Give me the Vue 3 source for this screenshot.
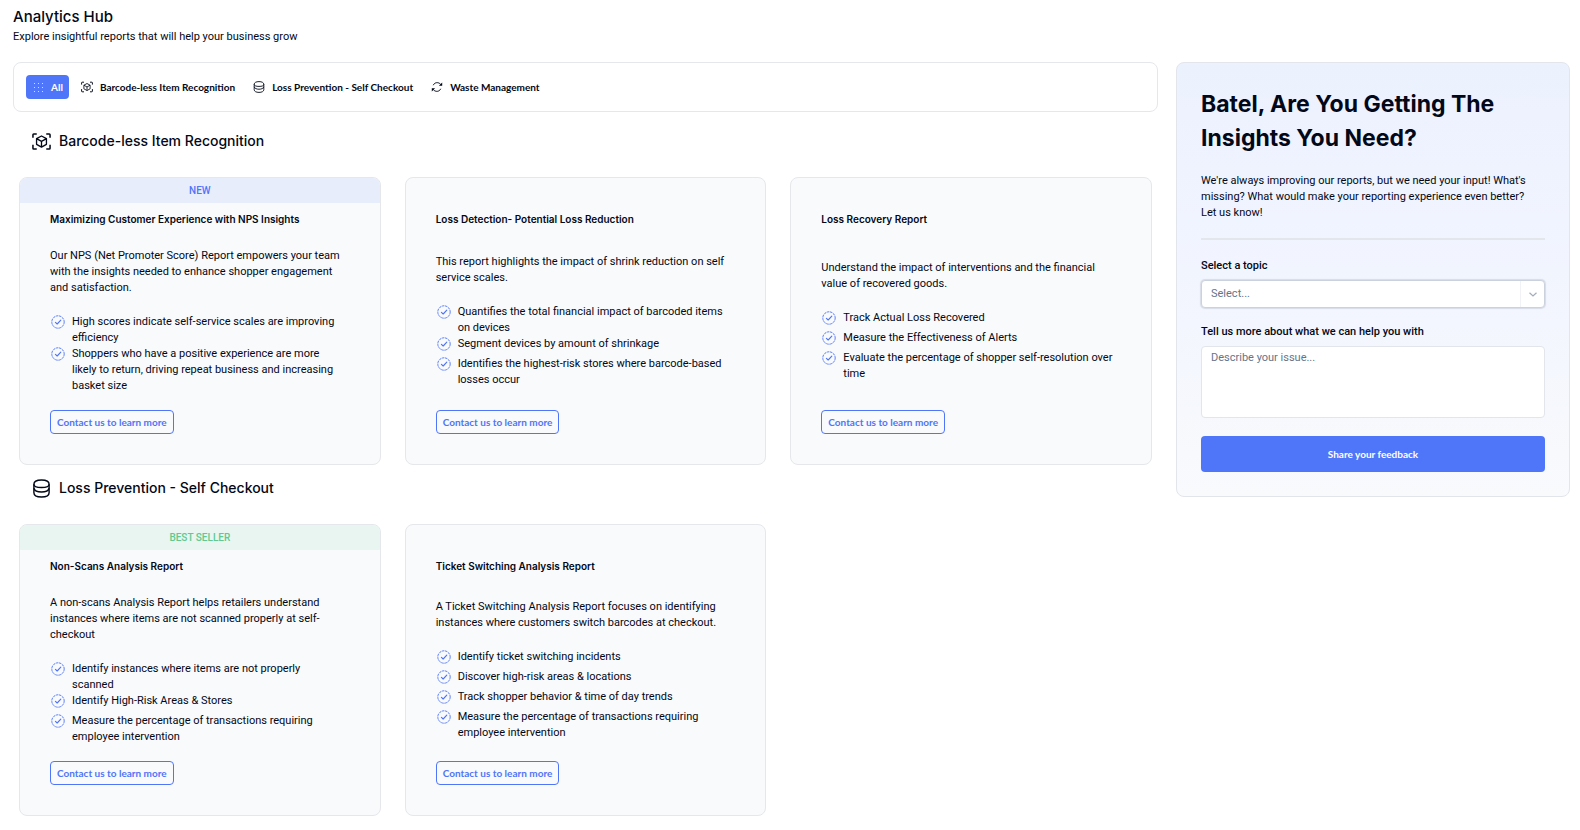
<script setup>
import { ref, computed } from 'vue'

const tabs = [
  { id: 'all', label: 'All', icon: 'grid' },
  { id: 'barcode', label: 'Barcode-less Item Recognition', icon: 'scan' },
  { id: 'loss', label: 'Loss Prevention - Self Checkout', icon: 'stack' },
  { id: 'waste', label: 'Waste Management', icon: 'cycle' }
]

const sections = [
  {
    id: 'barcode',
    title: 'Barcode-less Item Recognition',
    icon: 'scan',
    reports: [
      {
        badge: 'NEW',
        tone: 'new',
        title: 'Maximizing Customer Experience with NPS Insights',
        text: 'Our NPS (Net Promoter Score) Report empowers your team with the insights needed to enhance shopper engagement and satisfaction.',
        points: [
          'High scores indicate self-service scales are improving efficiency',
          'Shoppers who have a positive experience are more likely to return, driving repeat business and increasing basket size'
        ]
      },
      {
        title: 'Loss Detection- Potential Loss Reduction',
        text: 'This report highlights the impact of shrink reduction on self service scales.',
        points: [
          'Quantifies the total financial impact of barcoded items on devices',
          'Segment devices by amount of shrinkage',
          'Identifies the highest-risk stores where barcode-based losses occur'
        ]
      },
      {
        title: 'Loss Recovery Report',
        text: 'Understand the impact of interventions and the financial value of recovered goods.',
        points: [
          'Track Actual Loss Recovered',
          'Measure the Effectiveness of Alerts',
          'Evaluate the percentage of shopper self-resolution over time'
        ]
      }
    ]
  },
  {
    id: 'loss',
    title: 'Loss Prevention - Self Checkout',
    icon: 'stack',
    reports: [
      {
        badge: 'BEST SELLER',
        tone: 'best',
        title: 'Non-Scans Analysis Report',
        text: 'A non-scans Analysis Report helps retailers understand instances where items are not scanned properly at self-checkout',
        points: [
          'Identify instances where items are not properly scanned',
          'Identify High-Risk Areas & Stores',
          'Measure the percentage of transactions requiring employee intervention'
        ]
      },
      {
        title: 'Ticket Switching Analysis Report',
        text: 'A Ticket Switching Analysis Report focuses on identifying instances where customers switch barcodes at checkout.',
        points: [
          'Identify ticket switching incidents',
          'Discover high-risk areas & locations',
          'Track shopper behavior & time of day trends',
          'Measure the percentage of transactions requiring employee intervention'
        ]
      }
    ]
  }
]

const activeTab = ref('all')
const topic = ref('')
const message = ref('')

const visibleSections = computed(() =>
  activeTab.value === 'all' ? sections : sections.filter((s) => s.id === activeTab.value)
)
</script>

<template>
  <!-- shared icon shapes -->
  <svg class="sprite" aria-hidden="true">
    <symbol id="i-grid" viewBox="0 0 12 12">
      <g fill="currentColor" opacity=".75">
        <template v-for="y in 3" :key="y">
          <rect v-for="x in 3" :key="x" :x="x * 4 - 2" :y="y * 4 - 2" width="1" height="1" />
        </template>
      </g>
    </symbol>
    <symbol id="i-scan" viewBox="0 0 20 18">
      <g fill="none" stroke="currentColor" stroke-linejoin="round">
        <path stroke-width="1.6" d="M1 5V1.8a.8.8 0 0 1 .8-.8H5M15 1h3.2a.8.8 0 0 1 .8.8V5M19 12.500v3.700a.8.8 0 0 1-.8.8H15M5 17H1.800a.8.8 0 0 1-.8-.8V12.500" />
        <path stroke-width="1.4" d="M10 3.200l5.200 2.800v6L10 14.900 4.800 12V6zM4.800 6L10 8.900 15.200 6M10 8.900v6" />
      </g>
    </symbol>
    <symbol id="i-stack" viewBox="0 0 18 20">
      <g fill="none" stroke="currentColor" stroke-width="1.5">
        <path d="M1 5.500C1 2.800 4.200 1 9 1s8 1.800 8 4.500S13.800 9 9 9 1 8 1 5.500z" />
        <path d="M1 5.500v9C1 17.300 4.200 19 9 19s8-1.700 8-4.500v-9" />
        <path d="M1 9.700c.7 2.600 3.800 4 8 4s7.300-1.400 8-4" />
      </g>
    </symbol>
    <symbol id="i-cycle" viewBox="0 0 12 12">
      <g fill="none" stroke="currentColor" stroke-width="1">
        <path d="M2.300 4.200C3.500 1.200 7.500.8 9.600 3.300M9.700 7.800C8.500 10.800 4.500 11.200 2.400 8.700" />
      </g>
      <path fill="currentColor" d="M11.200 1.500v3.300H7.900zM.8 10.500V7.200h3.300z" />
    </symbol>
    <symbol id="i-check" viewBox="0 0 14 14">
      <g fill="none" stroke="currentColor">
        <circle cx="7" cy="7" r="6.200" stroke-width=".9" stroke-dasharray="2.600 .65" />
        <path stroke-width="1.100" stroke-linecap="round" stroke-linejoin="round" d="M4.400 7.300L6.200 9l3.600-3.800" />
      </g>
    </symbol>
  </svg>

  <div class="page">
    <header class="page-header">
      <h1>Analytics Hub</h1>
      <p>Explore insightful reports that will help your business grow</p>
    </header>

    <div class="columns">
      <main class="main">
        <nav class="tabs">
          <button
            v-for="tab in tabs"
            :key="tab.id"
            type="button"
            class="tab"
            :class="{ active: activeTab === tab.id }"
            @click="activeTab = tab.id"
          >
            <svg class="tab-icon"><use :href="'#i-' + tab.icon" /></svg>
            {{ tab.label }}
          </button>
        </nav>

        <section v-for="section in visibleSections" :key="section.id" class="section">
          <h2 class="section-title">
            <svg class="section-icon"><use :href="'#i-' + section.icon" /></svg>
            {{ section.title }}
          </h2>
          <div class="cards">
            <article v-for="report in section.reports" :key="report.title" class="card">
              <div class="ribbon" :class="report.tone">{{ report.badge }}</div>
              <div class="card-body">
                <h3>{{ report.title }}</h3>
                <div class="card-info">
                  <p>{{ report.text }}</p>
                  <ul>
                    <li v-for="point in report.points" :key="point">
                      <svg class="check"><use href="#i-check" /></svg>
                      <span>{{ point }}</span>
                    </li>
                  </ul>
                </div>
                <button type="button" class="contact">Contact us to learn more</button>
              </div>
            </article>
          </div>
        </section>
      </main>

      <aside class="feedback">
        <h2>Batel, Are You Getting The Insights You Need?</h2>
        <p>We're always improving our reports, but we need your input! What's missing? What would make your reporting experience even better? Let us know!</p>
        <hr />
        <form @submit.prevent>
          <label for="topic">Select a topic</label>
          <div class="select-box">
            <select id="topic" v-model="topic">
              <option value="">Select...</option>
              <option v-for="section in sections" :key="section.id" :value="section.id">{{ section.title }}</option>
            </select>
            <span class="select-arrow">
              <svg width="8" height="5" viewBox="0 0 8 5">
                <path d="M.5.7L4 4 7.500.7" fill="none" stroke="currentColor" stroke-width="1.200" />
              </svg>
            </span>
          </div>
          <label for="message">Tell us more about what we can help you with</label>
          <textarea id="message" v-model="message" placeholder="Describe your issue..."></textarea>
          <button type="submit" class="submit">Share your feedback</button>
        </form>
      </aside>
    </div>
  </div>
</template>

<style>
body {
  margin: 0;
  background: #fff;
}
</style>

<style scoped>
* {
  box-sizing: border-box;
}
h1,
h2,
h3,
p,
ul {
  margin: 0;
  padding: 0;
}
h1,
h2,
h3 {
  font-family: Inter, 'Liberation Sans', sans-serif;
}
button {
  font-family: Lato, 'Liberation Sans', sans-serif;
  font-size: 10px;
  font-weight: 700;
  color: inherit;
  cursor: pointer;
}
select,
textarea {
  font-family: inherit;
  font-size: 11px;
  color: inherit;
}
.sprite {
  position: absolute;
  width: 0;
  height: 0;
}
.page {
  padding: 6px 10px 12px 13px;
  font-family: Roboto, 'Liberation Sans', sans-serif;
  font-size: 11px;
  line-height: 16px;
  color: #020817;
}
.page-header h1 {
  font-size: 15px;
  line-height: 22px;
  font-weight: 500;
}
.page-header p {
  line-height: 18px;
}
.columns {
  display: flex;
  align-items: flex-start;
  gap: 18px;
  margin-top: 16px;
}
.main {
  flex: 1;
  min-width: 0;
}
.tabs {
  display: flex;
  align-items: center;
  gap: 6px;
  padding: 12px;
  border: 1px solid #e5e7eb;
  border-radius: 8px;
}
.tab {
  display: flex;
  align-items: center;
  gap: 7px;
  height: 24px;
  padding: 0 6px;
  border: 0;
  border-radius: 4px;
  background: none;
}
.tab.active {
  background: #4f75f8;
  color: #fff;
}
.tab-icon {
  width: 12px;
  height: 12px;
}
.section {
  padding: 0 6px;
}
.section-title {
  display: flex;
  align-items: center;
  gap: 8px;
  padding: 11px 0 24px 13px;
  font-size: 14px;
  line-height: 24px;
  font-weight: 500;
}
.tabs + .section .section-title {
  padding-top: 17px;
}
.section-icon {
  width: 19px;
  height: 19px;
}
.cards {
  display: grid;
  grid-template-columns: repeat(3, 1fr);
  gap: 24px;
}
.card {
  display: flex;
  flex-direction: column;
  overflow: hidden;
  border: 1px solid #e5e7eb;
  border-radius: 8px;
  background: #f9fafc;
}
.ribbon {
  height: 25px;
  line-height: 25px;
  font-size: 10px;
  font-weight: 500;
  text-align: center;
}
.ribbon.new {
  background: #e7edfb;
  color: #4f75f8;
}
.ribbon.best {
  background: #e8f5f0;
  color: #5fc98f;
}
.card-body {
  flex: 1;
  display: flex;
  flex-direction: column;
  align-items: flex-start;
  padding: 8px 30px 30px;
}
.card-body h3 {
  font-size: 10px;
  line-height: 16px;
  font-weight: 600;
}
.card-info {
  flex: 1;
  display: flex;
  flex-direction: column;
  justify-content: center;
  gap: 18px;
  padding: 21px 0 16px;
}
.card-info ul {
  padding: 0 7px 0 1px;
  list-style: none;
}
.card-info li {
  display: flex;
  align-items: flex-start;
  gap: 7px;
  min-height: 20px;
}
.check {
  flex: none;
  width: 14px;
  height: 14px;
  margin-top: 1px;
  color: #4f75f8;
}
.contact {
  height: 24px;
  padding: 0 6px;
  border: 1px solid #4f75f8;
  border-radius: 4px;
  background: #f9fafc;
  color: #4f75f8;
}
.feedback {
  width: 394px;
  padding: 24px;
  border: 1px solid #e2e5ec;
  border-radius: 8px;
  background: linear-gradient(#ecf1fe, #f3f6fe 60%, #f9fafc);
}
.feedback h2 {
  font-size: 23px;
  line-height: 34px;
  font-weight: 700;
}
.feedback p {
  margin-top: 18px;
  padding-right: 8px;
}
.feedback hr {
  height: 2px;
  margin: 17px 0 18px;
  border: 0;
  background: #e3e6eb;
}
.feedback label {
  display: block;
  font-weight: 500;
}
.select-box {
  position: relative;
  margin: 6px 0 16px;
}
.select-box select {
  display: block;
  width: 100%;
  height: 28px;
  padding: 0 32px 2px 9px;
  border: 1px solid #cbd2dd;
  border-radius: 4px;
  background: #fff;
  box-shadow: 0 0 1px 1px #d8dce6;
  color: #64748b;
  appearance: none;
}
.select-arrow {
  position: absolute;
  top: 1px;
  right: 1px;
  bottom: 1px;
  display: flex;
  align-items: center;
  justify-content: center;
  width: 24px;
  border-left: 1px solid #f1f2f5;
  color: #a3acba;
  pointer-events: none;
}
.feedback textarea {
  display: block;
  width: 100%;
  height: 72px;
  margin: 6px 0 18px;
  padding: 3px 9px;
  border: 1px solid #e2e5ec;
  border-radius: 4px;
  background: #fff;
  line-height: 16px;
  resize: none;
}
.feedback textarea::placeholder {
  color: #64748b;
}
.submit {
  display: block;
  width: 100%;
  height: 36px;
  border: 0;
  border-radius: 4px;
  background: #4f75f8;
  color: #fff;
}
</style>
